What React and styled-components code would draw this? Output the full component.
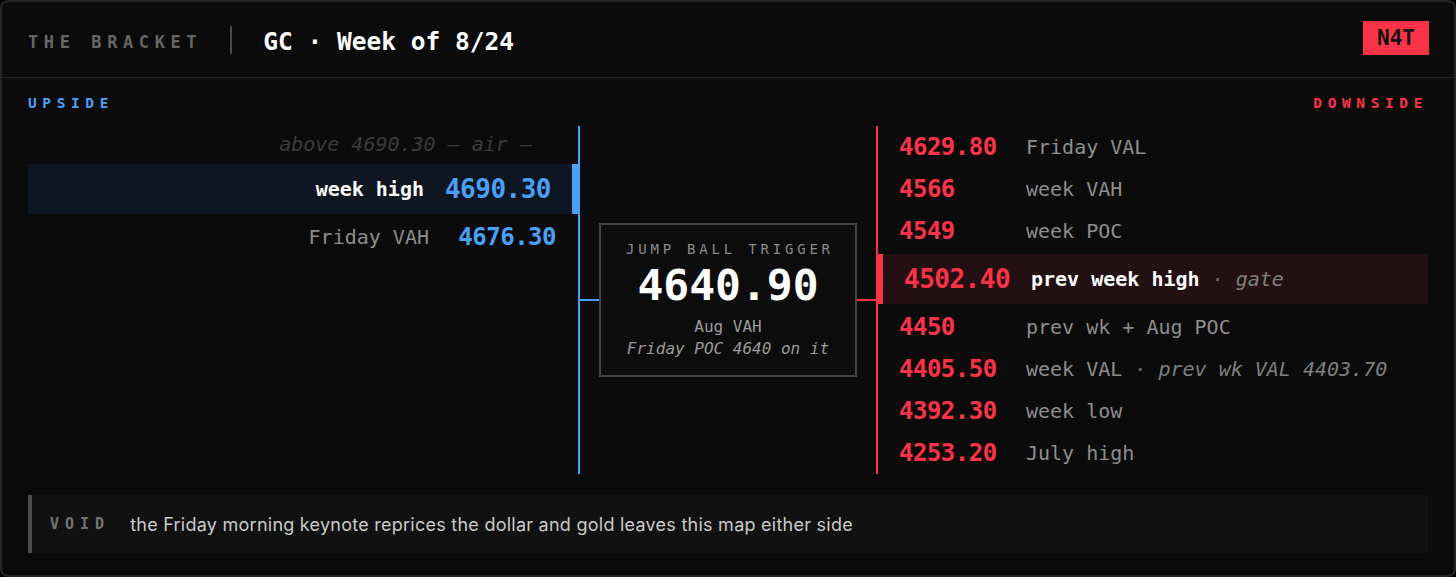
import React from "react";
import styled, { createGlobalStyle } from "styled-components";

const Global = createGlobalStyle`
  html, body { margin: 0; padding: 0; background: #000; }
  body { font-family: "DejaVu Sans Mono", "Liberation Mono", monospace; }
  * { box-sizing: border-box; }
`;

const BLUE = "#4aa0f8";
const RED = "#ff3347";
const MONO = `"DejaVu Sans Mono", "Liberation Mono", monospace`;

const Card = styled.div`
  width: 1456px;
  height: 577px;
  background: #0b0b0b;
  border: 2px solid #262626;
  border-radius: 8px;
  display: flex;
  flex-direction: column;
  overflow: hidden;
  font-family: ${MONO};
`;

const Header = styled.header`
  height: 76px;
  flex: none;
  display: flex;
  align-items: center;
  padding: 4px 25px 0 26px;
  border-bottom: 1px solid #242424;
`;

const Brand = styled.span`
  font-size: 17px;
  font-weight: bold;
  letter-spacing: 5.6px;
  color: #666;
`;

const Divider = styled.span`
  width: 2px;
  height: 28px;
  background: #4a4a4a;
  margin: -4px 31px 0 28px;
`;

const Title = styled.h1`
  margin: 0;
  font-size: 24.5px;
  font-weight: bold;
  color: #fff;
  flex: 1;
`;

const Badge = styled.span`
  background: ${RED};
  color: #111;
  font-weight: bold;
  font-size: 21px;
  width: 66px;
  height: 34px;
  display: flex;
  align-items: center;
  justify-content: center;
  margin-top: -8px;
`;

const Body = styled.div`
  padding: 17px 26px 0;
  display: flex;
  flex-direction: column;
`;

const SideLabels = styled.div`
  display: flex;
  justify-content: space-between;
  height: 16px;
  align-items: center;
`;

const SideLabel = styled.span`
  font-size: 14.5px;
  font-weight: bold;
  letter-spacing: 5.6px;
  color: ${(p) => p.$color};
`;

const Bracket = styled.div`
  margin-top: 15px;
  display: grid;
  grid-template-columns: 552px 296px 552px;
  height: 346px;
`;

const UpColumn = styled.div`
  border-right: 2px solid ${BLUE};
  display: flex;
  flex-direction: column;
`;

const DownColumn = styled.div`
  border-left: 2px solid ${RED};
  display: flex;
  flex-direction: column;
`;

const AirRow = styled.div`
  height: 36px;
  display: flex;
  align-items: center;
  justify-content: flex-end;
  padding-right: 46px;
  font-size: 20px;
  font-style: italic;
  color: #3c3c3c;
`;

const UpRow = styled.div`
  display: flex;
  align-items: center;
  justify-content: flex-end;
  height: ${(p) => (p.$hl ? "50px" : "42px")};
  margin: ${(p) => (p.$hl ? "2px 0" : "0")};
  padding-right: ${(p) => (p.$hl ? "27px" : "22px")};
  background: ${(p) => (p.$hl ? "#0e1621" : "transparent")};
  box-shadow: ${(p) => (p.$hl ? `inset -6px 0 0 ${BLUE}` : "none")};
`;

const DownRow = styled.div`
  display: flex;
  align-items: center;
  height: ${(p) => (p.$hl ? "50px" : "42px")};
  margin: ${(p) => (p.$hl ? "2px 0" : "0")};
  padding-left: ${(p) => (p.$hl ? "26px" : "21px")};
  background: ${(p) => (p.$hl ? "#221012" : "transparent")};
  box-shadow: ${(p) => (p.$hl ? `inset 5px 0 0 ${RED}` : "none")};
`;

const Label = styled.span`
  font-size: 20px;
  color: ${(p) => (p.$hl ? "#fff" : "#8e8e8e")};
  font-weight: ${(p) => (p.$hl ? "bold" : "normal")};
  white-space: nowrap;
`;

const Dot = styled.span`
  color: #6e6e6e;
  font-weight: normal;
`;

const Note = styled.span`
  font-style: italic;
  font-weight: normal;
  color: #7f7f7f;
`;

const Num = styled.span`
  font-size: ${(p) => (p.$hl ? "26px" : "24px")};
  letter-spacing: -0.5px;
  font-weight: bold;
  color: ${(p) => p.$color};
  width: 127px;
  flex: none;
  text-align: ${(p) => (p.$align === "right" ? "right" : "left")};
  white-space: nowrap;
`;

const Center = styled.div`
  display: flex;
  align-items: center;
`;

const Connector = styled.span`
  flex: 1;
  height: 2px;
  background: ${(p) => p.$color};
`;

const TriggerBox = styled.div`
  width: 258px;
  height: 154px;
  border: 2px solid #444;
  background: #0c0c0c;
  display: flex;
  flex-direction: column;
  align-items: center;
  padding-top: 16px;
`;

const TriggerTitle = styled.div`
  font-size: 14px;
  letter-spacing: 3.8px;
  margin-right: -3.8px;
  color: #8a8a8a;
`;

const TriggerValue = styled.div`
  font-size: 43px;
  font-weight: bold;
  color: #fff;
  line-height: 1;
  margin-top: 7px;
`;

const TriggerSub = styled.div`
  font-size: 16px;
  color: #9a9a9a;
  font-style: ${(p) => (p.$italic ? "italic" : "normal")};
  line-height: 22px;
  margin-top: ${(p) => (p.$first ? "9px" : "0")};
`;

const Void = styled.div`
  margin-top: 23px;
  height: 58px;
  background: #111;
  border-left: 4px solid #4e4e4e;
  display: flex;
  align-items: center;
  padding-left: 18px;
`;

const VoidTag = styled.span`
  font-size: 15px;
  font-weight: bold;
  letter-spacing: 6px;
  color: #747474;
  margin-right: 20px;
`;

const VoidText = styled.span`
  font-family: Inter, "Noto Sans", sans-serif;
  font-size: 18px;
  color: #cacaca;
  letter-spacing: 0.25px;
`;

const upside = [
  { num: "4690.30", label: "week high", hl: true },
  { num: "4676.30", label: "Friday VAH" },
];

const downside = [
  { num: "4629.80", label: "Friday VAL" },
  { num: "4566", label: "week VAH" },
  { num: "4549", label: "week POC" },
  { num: "4502.40", label: "prev week high", note: "gate", hl: true },
  { num: "4450", label: "prev wk + Aug POC" },
  { num: "4405.50", label: "week VAL", note: "prev wk VAL 4403.70" },
  { num: "4392.30", label: "week low" },
  { num: "4253.20", label: "July high" },
];

export default function App() {
  return (
    <>
      <Global />
      <Card>
        <Header>
          <Brand>THE BRACKET</Brand>
          <Divider />
          <Title>GC · Week of 8/24</Title>
          <Badge>N4T</Badge>
        </Header>
        <Body>
          <SideLabels>
            <SideLabel $color={BLUE}>UPSIDE</SideLabel>
            <SideLabel $color={RED}>DOWNSIDE</SideLabel>
          </SideLabels>
          <Bracket>
            <UpColumn>
              <AirRow>above 4690.30 — air —</AirRow>
              {upside.map((r) => (
                <UpRow key={r.num} $hl={r.hl}>
                  <Label $hl={r.hl}>{r.label}</Label>
                  <Num $hl={r.hl} $color={BLUE} $align="right">
                    {r.num}
                  </Num>
                </UpRow>
              ))}
            </UpColumn>
            <Center>
              <Connector $color={BLUE} />
              <TriggerBox>
                <TriggerTitle>JUMP BALL TRIGGER</TriggerTitle>
                <TriggerValue>4640.90</TriggerValue>
                <TriggerSub $first>Aug VAH</TriggerSub>
                <TriggerSub $italic>Friday POC 4640 on it</TriggerSub>
              </TriggerBox>
              <Connector $color={RED} />
            </Center>
            <DownColumn>
              {downside.map((r) => (
                <DownRow key={r.num} $hl={r.hl}>
                  <Num $hl={r.hl} $color={RED}>
                    {r.num}
                  </Num>
                  <Label $hl={r.hl}>
                    {r.label}
                    {r.note && (
                      <>
                        <Dot> · </Dot>
                        <Note>{r.note}</Note>
                      </>
                    )}
                  </Label>
                </DownRow>
              ))}
            </DownColumn>
          </Bracket>
          <Void>
            <VoidTag>VOID</VoidTag>
            <VoidText>
              the Friday morning keynote reprices the dollar and gold leaves this map either side
            </VoidText>
          </Void>
        </Body>
      </Card>
    </>
  );
}
